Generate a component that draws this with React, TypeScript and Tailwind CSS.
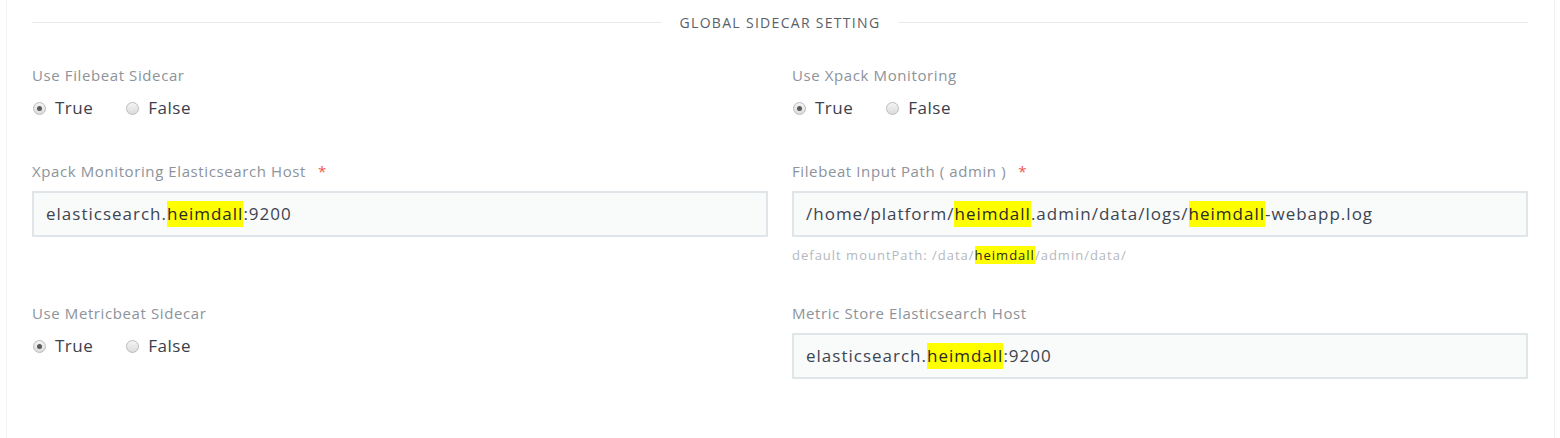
import React from "react";

const HL = ({ children }: { children: React.ReactNode }) => (
  <span className="bg-[#ffff00] text-[#2a2a2a]">{children}</span>
);

const Label = ({ children, required }: { children: React.ReactNode; required?: boolean }) => (
  <div className="h-5 leading-5 text-[15px] tracking-[0.6px] text-[#8c939b]">
    {children}
    {required && <span className="ml-[12px] text-[#f0554f]">*</span>}
  </div>
);

const Radio = ({ checked, label }: { checked?: boolean; label: string }) => (
  <label className="flex items-center gap-[9px]">
    <span className="relative w-[13px] h-[13px] rounded-full border border-[#b9bcbf] bg-gradient-to-b from-[#f4f4f4] to-[#dcdcdc] flex items-center justify-center">
      {checked && <span className="w-[5px] h-[5px] rounded-full bg-[#5a5a5a]" />}
    </span>
    <span className="text-[17px] tracking-[0.5px] text-[#3a414b]">{label}</span>
  </label>
);

const RadioGroup = () => (
  <div className="mt-[11px] h-6 flex items-center gap-[33px] pl-px">
    <Radio checked label="True" />
    <Radio label="False" />
  </div>
);

const Input = ({ children }: { children: React.ReactNode }) => (
  <div className="mt-[10px] h-[46px] border-2 border-[#dfe5e8] bg-[#f9fbfb] flex items-center px-3 text-[17px] tracking-[1px] text-[#3d4450] whitespace-nowrap">
    {children}
  </div>
);

export default function App() {
  return (
    <div
      className="w-[1560px] h-[438px] bg-white"
      style={{ fontFamily: '"Open Sans", "Noto Sans", sans-serif' }}
    >
      <div className="ml-[6px] mr-[5px] h-full border-l border-r border-[#edf2f4] pl-[25px] pr-[26px]">
        <div className="pt-[12px] flex items-center h-[32px]">
          <div className="flex-1 h-px bg-[#e9ecee]" />
          <div className="px-[18px] text-[14px] tracking-[1.3px] text-[#5a6068]">GLOBAL SIDECAR SETTING</div>
          <div className="flex-1 h-px bg-[#e9ecee]" />
        </div>

        <div className="mt-[33px] grid grid-cols-2 gap-x-6">
          <div>
            <Label>Use Filebeat Sidecar</Label>
            <RadioGroup />
          </div>
          <div>
            <Label>Use Xpack Monitoring</Label>
            <RadioGroup />
          </div>
        </div>

        <div className="mt-[41px] grid grid-cols-2 gap-x-6 items-start">
          <div>
            <Label required>Xpack Monitoring Elasticsearch Host</Label>
            <Input>
              elasticsearch.<HL>heimdall</HL>:9200
            </Input>
          </div>
          <div>
            <Label required>Filebeat Input Path ( admin )</Label>
            <Input>
              /home/platform/<HL>heimdall</HL>.admin/data/logs/<HL>heimdall</HL>-webapp.log
            </Input>
            <div className="mt-[9px] h-[18px] leading-[18px] text-[13px] tracking-[1px] text-[#b4b9be]">
              default mountPath: /data/<HL>heimdall</HL>/admin/data/
            </div>
          </div>
        </div>

        <div className="mt-[39px] grid grid-cols-2 gap-x-6 items-start">
          <div>
            <Label>Use Metricbeat Sidecar</Label>
            <RadioGroup />
          </div>
          <div>
            <Label>Metric Store Elasticsearch Host</Label>
            <Input>
              elasticsearch.<HL>heimdall</HL>:9200
            </Input>
          </div>
        </div>
      </div>
    </div>
  );
}
